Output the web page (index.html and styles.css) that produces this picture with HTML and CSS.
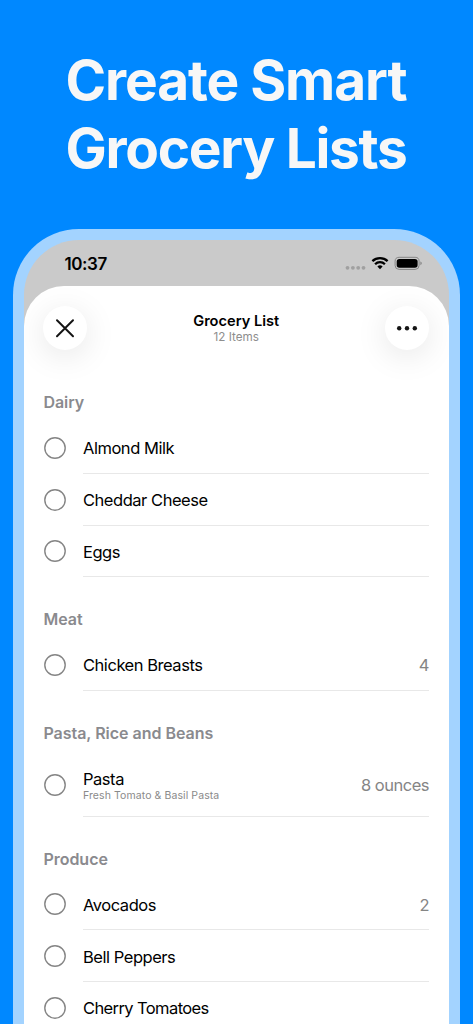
FILE: index.html
```html
<!DOCTYPE html>
<html lang="en">
<head>
<meta charset="utf-8">
<title>Grocery List</title>
<link rel="stylesheet" href="styles.css">
</head>
<body>
<h1 class="headline"><span class="line-one">Create Smart</span><br><span class="line-two">Grocery Lists</span></h1>
<main class="phone">
  <div class="status">
    <span class="time">10:37</span>
    <svg class="status-icons" width="78" height="18" viewBox="0 0 78 18">
      <g fill="#a0a0a0"><circle cx="3.5" cy="12.8" r="1.9"/><circle cx="8.9" cy="12.8" r="1.9"/><circle cx="14.2" cy="12.8" r="1.9"/><circle cx="19.5" cy="12.8" r="1.9"/></g>
      <g fill="none" stroke="#000" stroke-width="2.3"><path d="M28.4 6.2a11.1 11.1 0 0 1 15.2 0"/><path d="M31.1 9.3a6.8 6.8 0 0 1 9.8 0"/></g>
      <path d="M33.4 11.5a3.8 3.8 0 0 1 5.2 0L36 14.2z" fill="#000"/>
      <rect x="51.1" y="2.3" width="24" height="12.1" rx="4" fill="none" stroke="#858585"/>
      <rect x="52.7" y="3.9" width="20.9" height="8.9" rx="2.7"/>
      <path d="M76.4 6.5c1.8.6 1.8 3.1 0 3.7z" fill="#858585"/>
    </svg>
  </div>
  <section class="sheet">
    <header class="toolbar">
      <button class="round" aria-label="Close"><svg width="44" height="44" viewBox="0 0 44 44"><path d="M14 14.3l16 16M30 14.3l-16 16" fill="none" stroke="#151515" stroke-width="2" stroke-linecap="round"/></svg></button>
      <div class="titles"><div class="title">Grocery List</div><div class="count">12 Items</div></div>
      <button class="round" aria-label="More"><svg width="44" height="44" viewBox="0 0 44 44" fill="#151515"><circle cx="14.2" cy="22.2" r="2.2"/><circle cx="22" cy="22.2" r="2.2"/><circle cx="29.8" cy="22.2" r="2.2"/></svg></button>
    </header>
    <h2 class="group">Dairy</h2>
    <div class="item"><svg class="check" viewBox="0 0 22 22"><circle cx="11" cy="11" r="10.2"/></svg><div class="body"><span class="name">Almond Milk</span></div></div>
    <div class="item"><svg class="check" viewBox="0 0 22 22"><circle cx="11" cy="11" r="10.2"/></svg><div class="body"><span class="name">Cheddar Cheese</span></div></div>
    <div class="item"><svg class="check" viewBox="0 0 22 22"><circle cx="11" cy="11" r="10.2"/></svg><div class="body"><span class="name">Eggs</span></div></div>
    <h2 class="group">Meat</h2>
    <div class="item"><svg class="check" viewBox="0 0 22 22"><circle cx="11" cy="11" r="10.2"/></svg><div class="body"><span class="name">Chicken Breasts</span><span class="amount">4</span></div></div>
    <h2 class="group">Pasta, Rice and Beans</h2>
    <div class="item tall"><svg class="check" viewBox="0 0 22 22"><circle cx="11" cy="11" r="10.2"/></svg><div class="body"><div class="stack"><span class="name">Pasta</span><span class="recipe">Fresh Tomato &amp; Basil Pasta</span></div><span class="amount">8 ounces</span></div></div>
    <h2 class="group">Produce</h2>
    <div class="item"><svg class="check" viewBox="0 0 22 22"><circle cx="11" cy="11" r="10.2"/></svg><div class="body"><span class="name">Avocados</span><span class="amount">2</span></div></div>
    <div class="item"><svg class="check" viewBox="0 0 22 22"><circle cx="11" cy="11" r="10.2"/></svg><div class="body"><span class="name">Bell Peppers</span></div></div>
    <div class="item"><svg class="check" viewBox="0 0 22 22"><circle cx="11" cy="11" r="10.2"/></svg><div class="body"><span class="name tight">Cherry Tomatoes</span></div></div>
  </section>
</main>
</body>
</html>
```
FILE: styles.css
```css
* { box-sizing: border-box; }
html, body { margin: 0; height: 1024px; overflow: hidden; }
body { background: #0088ff; font-family: Inter, "Liberation Sans", sans-serif; color: #000; }
.headline { margin: 0; padding: 46px 1px 0 0; height: 229px; text-align: center; color: #f7f7f7; font-size: 55px; line-height: 68px; font-weight: 700; white-space: nowrap; }
.line-one { letter-spacing: -1.1px; }
.line-two { letter-spacing: -1.3px; }
.phone { width: 447px; height: 795px; margin-left: 13px; border: 11px solid #a3d3ff; border-bottom: 0; border-radius: 66px 66px 0 0; background: #cacaca; overflow: hidden; }
.status { height: 46px; padding: 14px 27px 0 40.5px; display: flex; justify-content: space-between; align-items: flex-start; }
.time { font-size: 17px; line-height: 20px; font-weight: 600; letter-spacing: -.4px; }
.status-icons { margin-top: 1px; }
.sheet { height: 738px; padding: 0 20px 0 19.4px; background: #fff; border-radius: 40px 40px 0 0; overflow: hidden; }
.toolbar { height: 74.2px; padding-top: 20px; display: flex; justify-content: space-between; align-items: flex-start; }
.round { width: 44px; height: 44px; padding: 0; border: 0; border-radius: 50%; background: #fff; box-shadow: 0 6px 32px rgba(0,0,0,.1); }
.round svg { display: block; }
.titles { text-align: center; padding-top: 6px; }
.title { font-size: 14.6px; line-height: 18px; font-weight: 600; }
.count { font-size: 11.7px; line-height: 14px; color: #8e8e8e; }
.group { margin: 0; height: 61.8px; padding-top: 32px; font-size: 16px; line-height: 20px; font-weight: 600; letter-spacing: -.02px; color: #8a8a8e; }
.item { height: 51.8px; display: flex; align-items: center; }
.tall { height: 64px; }
.check { width: 22px; height: 22px; margin: 0 16.6px 0 1px; flex: none; fill: none; stroke: #858585; stroke-width: 1.4px; }
.body { flex: 1; height: 100%; padding-top: 1.5px; display: flex; justify-content: space-between; align-items: center; border-bottom: 1px solid #e8e8e8; }
.name { font-size: 16.5px; line-height: 20px; letter-spacing: -.46px; }
.tight { letter-spacing: -.6px; }
.amount { font-size: 16.5px; line-height: 20px; letter-spacing: -.5px; color: #858585; }
.stack { display: flex; flex-direction: column; }
.recipe { font-size: 10.5px; line-height: 13px; letter-spacing: .09px; color: #8a8a8a; }
```
